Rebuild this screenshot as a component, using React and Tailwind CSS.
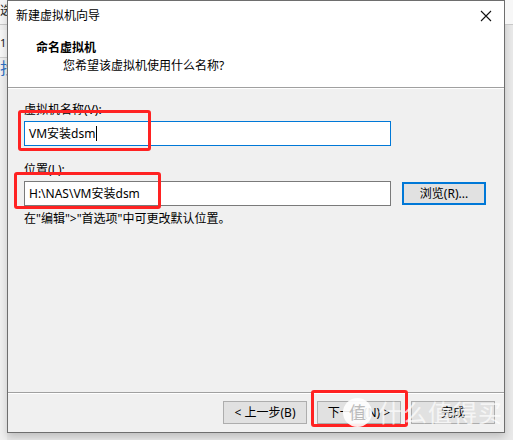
const font = { fontFamily: '"Noto Sans", "Noto Sans CJK SC", sans-serif' };

const Field = ({ value, focused }) => (
  <div
    className={`h-[25px] w-[367px] bg-white flex items-center px-[4px] text-[12px] text-[#000] ${
      focused ? "border border-[#0078d7]" : "border border-[#7a7a7a]"
    }`}
  >
    {value}
    {focused && <span className="ml-[1px] w-[1px] h-[15px] bg-black" />}
  </div>
);

const Button = ({ children, primary }) => (
  <div
    className={`h-[23px] w-[84px] flex items-center justify-center text-[12px] text-black bg-[#e1e1e1] ${
      primary ? "border-2 border-[#0078d7]" : "border border-[#adadad]"
    }`}
  >
    {children}
  </div>
);

const App = () => {
  return (
    <div className="relative w-[513px] h-[440px] overflow-hidden bg-[#e9e9e9] flex" style={font}>
      {/* background window strip */}
      <div className="w-[7px] flex flex-col bg-[#f0f0f0]">
        <div className="h-[25px] bg-[#f5f5f5] border-b border-[#c8c8c8] text-[12px] leading-[22px] text-[#222]">选</div>
        <div className="h-[5px]" />
        <div className="h-[28px] bg-[#f7f7f7] border-b border-[#d0d0d0] text-[11px] text-[#222] leading-[26px]">1</div>
        <div className="h-[20px] text-[16px] leading-[20px] text-[#2e6fc4]">找</div>
      </div>

      {/* dialog */}
      <div className="w-[498px] h-[433px] flex flex-col border border-[#6e6e6e] bg-[#f0f0f0] shadow-[0_4px_8px_rgba(0,0,0,0.18)]">
        <div className="h-[29px] bg-white flex items-center justify-between pl-[8px] pr-[10px]">
          <span className="text-[12px] text-black">新建虚拟机向导</span>
          <svg width="12" height="12" viewBox="0 0 12 12" className="mr-[2px]">
            <path d="M1 1L11 11M11 1L1 11" stroke="#111" strokeWidth="1.1" />
          </svg>
        </div>
        <div className="h-[57px] bg-white flex flex-col pl-[28px] pt-[9px]">
          <span className="text-[12px] font-bold text-black leading-[18px]">命名虚拟机</span>
          <span className="text-[12px] text-black leading-[18px] pl-[27px]">您希望该虚拟机使用什么名称?</span>
        </div>
        <div className="h-px bg-[#a0a0a0]" />
        <div className="h-px bg-white" />

        <div className="flex-1 flex flex-col pl-[16px] pt-[12px]">
          <span className="text-[12px] leading-[18px] text-black">虚拟机名称(V):</span>
          <div className="mt-[2px]">
            <Field value="VM安装dsm" focused />
          </div>
          <span className="mt-[15px] text-[12px] leading-[18px] text-black">位置(L):</span>
          <div className="mt-[2px] flex items-center gap-[11px]">
            <Field value="H:\NAS\VM安装dsm" />
            <Button primary>浏览(R)...</Button>
          </div>
          <span className="mt-[4px] text-[12px] leading-[18px] text-black">在"编辑">"首选项"中可更改默认位置。</span>
        </div>

        <div className="h-px bg-[#a0a0a0]" />
        <div className="h-px bg-white" />
        <div className="h-[38px] flex justify-end items-start pt-[7px] pr-[9px] gap-[10px]">
          <Button>&lt; 上一步(B)</Button>
          <Button>下一步(N) &gt;</Button>
          <Button>完成</Button>
        </div>
      </div>

      {/* right strip */}
      <div className="flex-1 flex flex-col">
        <div className="h-[25px] bg-[#f7f7f7] border-b border-[#c8c8c8]" />
      </div>

      {/* red annotations */}
      <div className="absolute left-[18px] top-[110px] w-[133px] h-[41px] border-[3px] border-[#f22] rounded-[3px]" />
      <div className="absolute left-[14px] top-[172px] w-[147px] h-[37px] border-[3px] border-[#f22] rounded-[3px]" />
      <div className="absolute left-[311px] top-[390px] w-[97px] h-[37px] border-[3px] border-[#f22] rounded-[3px]" />

      {/* watermark */}
      <div className="absolute left-[343px] top-[398px] w-[29px] h-[29px] rounded-full bg-white/90 flex items-center justify-center text-[17px] text-[#bbb]">
        值
      </div>
      <div className="absolute left-[378px] top-[398px] text-[24px] leading-[30px] text-white/70 tracking-[1px]">
        什么值得买
      </div>
    </div>
  );
};

export default App;
